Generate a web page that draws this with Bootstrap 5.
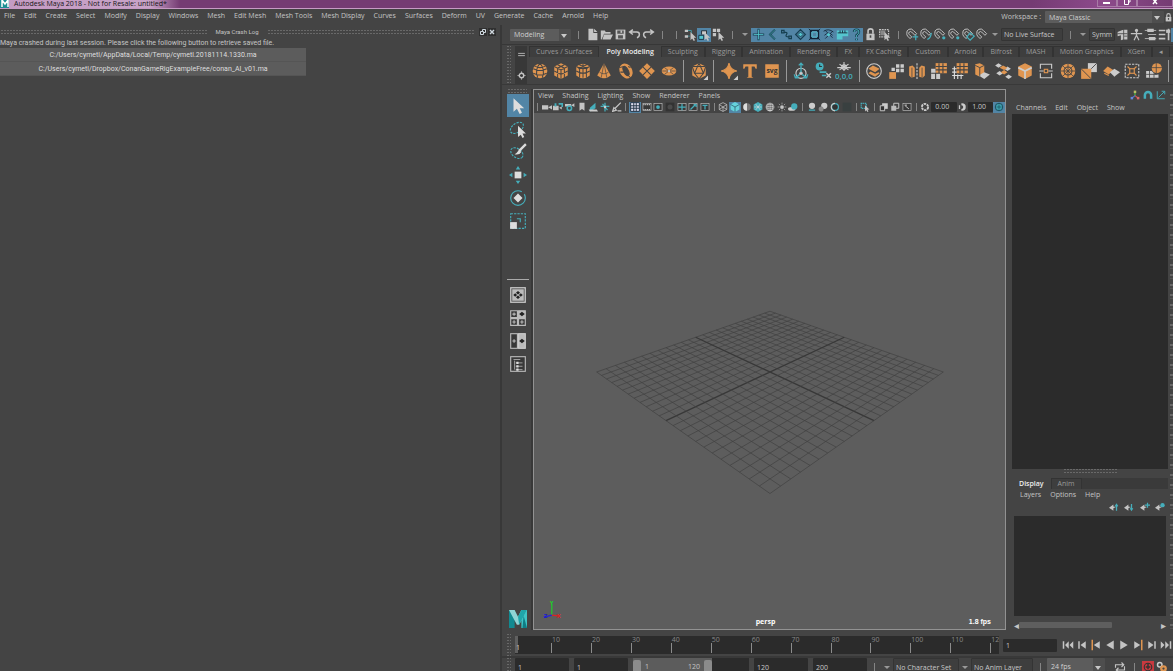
<!DOCTYPE html>
<html lang="en">
<head>
<meta charset="utf-8">
<meta name="viewport" content="width=device-width, initial-scale=1">
<title>Autodesk Maya 2018</title>
<link href="https://cdn.jsdelivr.net/npm/bootstrap@5.3.0/dist/css/bootstrap.min.css" rel="stylesheet">
<style>
:root{--face:#444;--dark:#2b2b2b;--line:#373737;--txt:#c4c4c4;--blue:#5285a6}
body{font:7px/10px "Open Sans","Noto Sans",sans-serif;background:var(--face);color:var(--txt);height:100vh;overflow:hidden}
button{background:none;border:0;padding:0;color:inherit;font:inherit;line-height:inherit}
.titlebar{height:9px;background:linear-gradient(90deg,#c49bc3 0,#c9a3c8 150px,#753b73 180px,#753b73 88%,#8d4a8b 94%,#753b73);border-bottom:1px solid #c79ac5;color:#151515;line-height:7px}
.winbtn{width:20px;height:7px;border:1px solid #a87ba6;border-top:0;color:#fff;display:flex;justify-content:center}
.winbtn.wide{width:36px}
.menubar{height:16px}
.menus{gap:9px;line-height:13px;white-space:nowrap;align-items:flex-start}
.menus.tight{line-height:11px}
.pick{appearance:none;font-size:7px;line-height:11px;height:12px;padding:0 4px;border:0;border-radius:1px;color:#d0d0d0;background:linear-gradient(#4e4e4e,#4e4e4e) right/12px 100% no-repeat #5c5c5c}
.pickbox{position:relative}
.pickbox:after{content:"";position:absolute;right:4px;top:5px;border:3px solid transparent;border-top:4px solid #c8c8c8;border-bottom:0;pointer-events:none}
.range .pickbox:after{top:8px}
.box{font-size:7px;line-height:10px;background:var(--dark);border:0;border-radius:1px;color:#c8c8c8;padding:0 3px;min-width:0}
.hollow{background:#3e3e3e;border:1px solid #343434;height:13px;padding:0 2px}
.leftdock{flex:0 0 42.8%;border-right:2px solid #383838;font-family:Roboto,"Open Sans",sans-serif}
.dockhead{padding-top:2px;padding-bottom:1px;font-size:6px}
.dots,.dotsv{background:conic-gradient(from 90deg at 1px 1px,transparent 270deg,#696969 0) 0 0/3px 3px}
.dots{height:5px}
.dotsv{width:5px;margin-right:4px}
.dockbtn{width:8px;height:8px;background:#303030;color:#cfd8df;margin-left:1px}
.dockbtn svg{display:block;width:100%;height:100%}
.crash{width:61.2%}
.crash button{height:14px;background:#5c5c5c;border-bottom:1px solid #555;color:#dedede}
.status{height:20px;border-bottom:1px solid var(--line)}
.cell{display:flex;align-items:center;justify-content:center;min-width:0}
.cell svg{display:block;flex-shrink:0}
.status .cell{flex:0 0 14px;height:14px}
.status .cell svg{width:13px;height:13px}
.on{background:var(--blue)}
.status .sep,.range .sep{flex:0 0 14px}
.sep:before{content:"";width:1px;height:8px;background:#858585;display:block;margin:auto}
.arr{flex:0 0 12px}
.arr:before{content:"";display:block;border:3px solid transparent;border-top:3px solid #999;border-bottom:0;width:0;margin:auto}
.shelf{height:40px;border-bottom:1px solid #393939;padding-top:1px}
.shelfside{width:12px;background:#383838;margin-right:2px}
.tabs{height:11px;background:#3a3a3a;overflow:hidden}
.tabs button{padding:0 6px;border:1px solid #333;border-bottom:0;line-height:10px;color:#9a9a9a;white-space:nowrap;background:#3e3e3e}
.tabs button.cur{background:var(--face);color:#eee;font-weight:600;border-color:var(--face)}
.shelfrow{height:27px}
.shelfrow .cell{flex:18 1 0}
.shelfrow .sep{flex:7 1 0}
.shelfrow .sep:before{height:22px;background:#999}
.shelfrow .cell svg{width:18px;height:18px}
.tools{width:31px;padding-left:5px;border-right:2px solid #383838}
.tools .cell{width:22px;height:23px}
.tools .cell svg{width:18px;height:18px}
.rule{width:22px;height:1px;background:#aaa;margin-top:47px;margin-bottom:3px}
.view{border:1px solid #929292;background:#5d5d5d;min-width:0}
.viewhead{background:var(--face);height:23px}
.vrow{height:12px}
.vrow .cell{flex:12 1 0;height:11px}
.vrow .cell svg{width:10px;height:10px}
.vrow .sep{flex:7 1 0}
.vrow .box{flex:26 1 0;width:0;height:10px;padding:0;text-indent:4px}
.scene{position:relative}
.scene svg{position:absolute;inset:0;width:100%;height:100%}
.tag{position:absolute;bottom:2px;color:#fff;font-weight:700}
.persp{padding-right:8px}
.fps{right:14px;font-family:"Liberation Sans",sans-serif}
.side{flex:0 0 156px;margin-left:6px}
.sideicons{height:12px}
.well{background:var(--dark)}
.lowerwell{height:114px;margin:0 2px}
.scroll{height:10px}
.scroll span{font-size:10px}
.thumb{width:61%;height:6px;background:#5e5e5e;border-radius:1px}
.time{height:24px;border-bottom:2px solid #393939}
.ruler{background:var(--dark);height:18px;min-width:0}
.tick{position:relative;min-width:0;color:#888;line-height:8px;overflow:hidden;padding-left:1px}
.tick:after{content:"";position:absolute;left:0;bottom:1px;width:1px;height:10px;background:#8c8c8c}
.now{color:#ddd;padding-top:8px}
.now:after{height:17px;width:3px;background:rgba(150,150,150,.5)}
.play .cell{width:14px;height:14px}
.play .cell svg{width:12px;height:12px}
.range{height:13px;overflow:hidden}
.range .box,.range .pick{height:18px;line-height:16px}
.field{width:54px}
.fields{gap:5px;min-width:0}
.thumb2{width:79px;height:18px;background:#5c5c5c}
.grip{width:8px;height:14px;background:#8b8b8b;border-radius:2px}
.edge{width:5px;border-left:2px solid var(--face);background:repeating-linear-gradient(#444 0 5px,#686868 5px 7px,#444 7px 9px,#555 9px 10px)}
</style>
</head>
<body class="d-flex flex-column">
<header class="titlebar d-flex flex-shrink-0">
  <svg width="10" height="8" viewBox="0 0 10 8" class="flex-shrink-0"><rect width="9" height="8" fill="#1d8f95"/><path d="M2 7V0l3 4 3-4v7" fill="none" stroke="#fff" stroke-width="1.5"/></svg>
  <span class="ps-1 flex-grow-1 text-nowrap">Autodesk Maya 2018 - Not for Resale: untitled*</span>
  <button class="winbtn" aria-label="Minimize"><svg width="8" height="6"><path d="M0 3h7" stroke="#fff" stroke-width="2"/></svg></button>
  <button class="winbtn" aria-label="Restore"><svg width="8" height="6" fill="none" stroke="#fff"><path d="M1.500 0v4.500h4V0M5 2h2V0"/></svg></button>
  <button class="winbtn wide" aria-label="Close"><svg width="8" height="6"><path d="M2 4l4-5M6 4L2-1" stroke="#fff" stroke-width="1.500"/></svg></button>
</header>
<nav class="menubar d-flex flex-shrink-0 justify-content-between">
  <div class="menus d-flex ps-1" data-menu="File|Edit|Create|Select|Modify|Display|Windows|Mesh|Edit Mesh|Mesh Tools|Mesh Display|Curves|Surfaces|Deform|UV|Generate|Cache|Arnold|Help"></div>
  <div class="d-flex align-items-center">
    <label for="ws" class="pe-1">Workspace :</label>
    <div class="pickbox"><select id="ws" class="pick" style="width:119px"><option>Maya Classic</option></select></div>
    <div class="d-flex" data-icons="lock"></div>
  </div>
</nav>
<main class="d-flex flex-grow-1" style="min-height:0">
  <section class="leftdock">
    <div class="dockhead d-flex align-items-center pe-1">
      <div class="dots flex-grow-1"></div><span class="px-2">Maya Crash Log</span><div class="dots flex-grow-1 me-1"></div>
      <button class="dockbtn" aria-label="Float"><svg viewBox="0 0 8 8" fill="none" stroke="currentColor"><path d="M3.500 3V1.500h3v3H5M1.500 3.500h3v3h-3z"/></svg></button>
      <button class="dockbtn" aria-label="Close panel"><svg viewBox="0 0 8 8" stroke="currentColor" stroke-width="1.400"><path d="M2 2l4 4M6 2L2 6"/></svg></button>
    </div>
    <div class="text-nowrap">Maya crashed during last session. Please click the following button to retrieve saved file.</div>
    <div class="crash d-flex flex-column">
      <button>C:/Users/cymetl/AppData/Local/Temp/cymetl.20181114.1330.ma</button>
      <button>C:/Users/cymetl/Dropbox/ConanGameRigExampleFree/conan_AI_v01.ma</button>
    </div>
  </section>
  <section class="d-flex flex-column flex-grow-1" style="min-width:0">
    <div class="status d-flex align-items-center ps-1 flex-shrink-0 overflow-hidden">
      <div class="dotsv align-self-stretch my-1"></div>
      <div class="pickbox"><select class="pick" aria-label="Menu set" style="width:61px"><option>Modeling</option></select></div>
      <div class="d-flex align-items-center flex-grow-1" data-icons="| file open save undo redo | | selA selB* selC | v snap1* snap2* snap3* snap4* snap5* snap6* snap7* help* lock selD | mag1 mag3 mag2 mag2 mag4 mag0 v =No_Live_Surface=62 | v =Symm=26 hand person sliders sliders2 ball*"></div>
    </div>
    <div class="shelf d-flex ps-1 flex-shrink-0">
      <div class="dotsv"></div>
      <div class="shelfside d-flex flex-column justify-content-between align-items-center pt-1 pb-1" data-icons="bars gear"></div>
      <div class="flex-grow-1" style="min-width:0">
        <div class="tabs d-flex" data-menu="Curves / Surfaces|*Poly Modeling|Sculpting|Rigging|Animation|Rendering|FX|FX Caching|Custom|Arnold|Bifrost|MASH|Motion Graphics|XGen|◂"></div>
        <div class="shelfrow d-flex align-items-center" data-icons="sphere cube cyl cone torus plane disc | poly | star type svg | axis hist freeze | comb sep mirror fillh grid2 extr bridge bevel wedge wheel dup boolean lattice smooth |"></div>
      </div>
    </div>
    <div class="d-flex flex-grow-1 pt-1" style="min-height:0">
      <aside class="tools d-flex flex-column">
        <div class="dots me-1"></div>
        <div data-icons="arrow* lasso brush move rotate scale"></div>
        <div class="rule"></div>
        <div data-icons="single four two outline"></div>
        <div class="mt-auto" data-icons="maya"></div>
      </aside>
      <section class="view flex-grow-1 d-flex flex-column">
        <div class="viewhead">
          <div class="menus tight d-flex ps-1" data-menu="View|Shading|Lighting|Show|Renderer|Panels"></div>
          <div class="vrow d-flex align-items-center" data-icons="| cam camT camL book plT pivot pen | gridI* film res mask field safe titleI | wire shade* half tex check light shadow | ao motion aa dim | isoSel | xray xrayj expo | gam =0.00=0 gam2 =1.00=0 srgb*"></div>
        </div>
        <div class="scene flex-grow-1">
          <svg viewBox="-1 -2 471 518" aria-label="Perspective grid">
            <g id="grid" stroke="#414141" stroke-width=".7"></g>
            <g stroke-width="1.200"><path d="M16 502v-11" stroke="#1fce2b"/><path d="M16 502l8 1" stroke="#d22"/><path d="M16 502l-8 2" stroke="#22d"/></g>
            <g font-size="6" font-weight="700"><text x="14" y="492" fill="#1fce2b">Y</text><text x="21" y="505" fill="#d22">X</text><text x="8" y="505" fill="#1c1cc8">Z</text></g>
          </svg>
          <div class="tag persp start-0 end-0 text-center">persp</div>
          <div class="tag fps">1.8 fps</div>
        </div>
      </section>
      <aside class="side d-flex flex-column">
        <div class="sideicons vrow d-flex justify-content-end"><div class="d-flex" style="width:40px" data-icons="axisC magC graph"></div></div>
        <div class="menus d-flex ps-1" data-menu="Channels|Edit|Object|Show"></div>
        <div class="well flex-grow-1"></div>
        <div class="dots align-self-center" style="width:54px"></div>
        <div class="tabs d-flex mt-1" data-menu="*Display|Anim"></div>
        <div class="menus tight d-flex ps-2" data-menu="Layers|Options|Help"></div>
        <div class="vrow d-flex justify-content-end align-items-end"><div class="d-flex" style="width:62px" data-icons="lay1 lay2 lay3 lay4"></div></div>
        <div class="lowerwell d-flex flex-column mt-1">
          <div class="well flex-grow-1"></div>
          <div class="scroll d-flex align-items-center mt-1"><span>◂</span><div class="thumb"></div><span class="ms-auto">▸</span></div>
        </div>
      </aside>
      <div class="edge ms-auto"></div>
    </div>
    <div class="time d-flex align-items-center ps-1 flex-shrink-0 mt-1">
      <div class="dotsv align-self-stretch"></div>
      <div class="ruler d-flex flex-grow-1" id="ruler"></div>
      <input class="box field ms-1" aria-label="Current frame" value="1" style="height:13px">
      <div class="play d-flex ps-1" data-icons="pStart pPrev pKeyL pBack pFwd pKeyR pNext pEnd"></div>
    </div>
    <div class="range d-flex ps-1 flex-shrink-0">
      <div class="dotsv"></div>
      <div class="fields d-flex flex-grow-1 align-items-start">
        <input class="box field" aria-label="Animation start" value="1">
        <input class="box field" aria-label="Playback start" value="1">
        <div class="flex-grow-1 well">
          <div class="thumb2 d-flex align-items-center justify-content-between"><span class="grip"></span><span class="me-auto ps-1">1</span><span class="pe-1">120</span><span class="grip"></span></div>
        </div>
        <input class="box field" aria-label="Playback end" value="120">
        <input class="box field" aria-label="Animation end" value="200">
      </div>
      <div class="d-flex align-items-center" style="height:18px" data-icons="| v =No_Character_Set=66 v =No_Anim_Layer=62 |"></div>
      <div class="pickbox"><select class="pick" aria-label="Frame rate" style="width:58px"><option>24 fps</option></select></div>
      <div class="play d-flex align-items-center ps-2 pe-1" style="height:18px" data-icons="loop | autokey gear2"></div>
    </div>
  </section>
</main>
<script>
const T='#45aebb',O='#df9550',K='#444';
const magnet='<path d="M1 6.500A4.500 4.500 0 0 1 9 3l4 4-2 2-4-4a2 2 0 0 0-3 3l3 3-2 2-3-3a4.500 4.500 0 0 1-1-3.500" fill="none" stroke="currentColor" stroke-width="1.200"/>';
const poly=(f,l)=>`<g fill="${O}">${f}</g><g fill="none" stroke="${K}" stroke-width=".9">${l}</g>`;
const frame=s=>`<rect x="1.500" y="2.500" width="13" height="11" fill="#383838" stroke="currentColor"/>${s}`;
const lay='<path d="M0 9l7-5v3l4 1-4 2v4z" fill="currentColor"/>';
const ptr='<path d="M8 5v10l2-2 2 3 1.500-1-1.500-3h3z" fill="currentColor"/>';
const I={
file:'<path d="M3 1h6v5h5v9H3zM10 1l4 4h-4z" fill="currentColor"/>',
open:'<path d="M1 3h5l1 2h6v2H5l-3 7H1zM5 8h11l-3 6H3z" fill="currentColor"/>',
save:'<path d="M2 2h12v12H2z" fill="currentColor"/><path d="M4 3h8v4H4zM5 9h6v4H5z" fill="#555"/><path d="M8 3h2v3H8z" fill="currentColor"/>',
undo:'<path d="M6 2L2 5l4 3M2 5h9q3 0 3 3t-3 4" fill="none" stroke="currentColor" stroke-width="1.800"/>',
redo:'<path d="M10 2l4 3-4 3M14 5H5q-3 0-3 3t3 4" fill="none" stroke="currentColor" stroke-width="1.800"/>',
selA:`<path d="M1 2h4v3H1zM1 9h4v3H1z" fill="currentColor"/><path d="M5 3h4v3M5 10h2" stroke="${T}" fill="none"/>`+ptr,
selB:`<path d="M4 3h7v5H4z" fill="#222"/><path d="M5 4h5v4H5z" fill="#ccc"/><path d="M1 9h6v5H1z" fill="#55c6cf" stroke="#123"/>`+ptr,
selC:'<path d="M1 1h4v4H1zM6 1h4v4H6zM1 6h4v4H1z" fill="currentColor"/>'+ptr,
selD:'<path d="M2 2h11v9H2z" fill="none" stroke="currentColor" stroke-width="1.500" stroke-dasharray="2 1"/><path d="M3 3h6v6H3z" fill="#888"/>'+ptr,
snap1:'<path d="M8 1v14M1 8h14" stroke="#163f50" stroke-width="2.500"/><path d="M8 2v12M2 8h12" stroke="#55c6cf"/>',
snap2:'<path d="M11 2L5 8l6 6" stroke="#163f50" stroke-width="2.500" fill="none"/><path d="M11 2L5 8l6 6" stroke="#55c6cf" stroke-width=".8" fill="none"/>',
snap3:'<path d="M2 3h3v3H2zM11 10h3v3h-3zM5 5q5 0 3 3t3 3" stroke="#163f50" stroke-width="1.500" fill="none"/>',
snap4:'<path d="M8 2l6 6-6 6-6-6z" fill="none" stroke="#163f50" stroke-width="1.500"/><path d="M8 5l3 3-3 3-3-3z" fill="#55c6cf" stroke="#163f50"/>',
snap5:'<path d="M3 3h10v10H3z" fill="none" stroke="#123" stroke-width="1.500"/><path d="M5 5h6v6H5z" fill="none" stroke="#55c6cf"/><path d="M1 1l4 4M15 15l-4-4M15 1l-4 4M1 15l4-4" stroke="#123"/>',
snap6:'<path d="M2 4q6-4 12 1M3 9q5-5 10 0M4 13l9-9M4 3l9 9" stroke="#123" fill="none"/><circle cx="8" cy="8" r="2" fill="#55c6cf"/>',
snap7:'<path d="M1 3h14v7H8v4H1z" fill="#55c6cf"/><path d="M2 6h12M5 3v3M8 3v3M11 3v3" stroke="#123"/>',
help:'<path d="M5 5q0-3 3-3t3 3q0 2-3 4v2M8 13v2" stroke="#163f50" stroke-width="3" fill="none"/><path d="M5 5q0-3 3-3t3 3q0 2-3 4v2M8 13v2" stroke="#55c6cf" fill="none"/>',
lock:'<path d="M3 7h10v8H3z" fill="currentColor"/><path d="M5 7V4q0-3 3-3t3 3v3" fill="none" stroke="currentColor" stroke-width="2"/><path d="M8 9v3" stroke="#444" stroke-width="2"/>',
mag0:magnet,
mag1:magnet+`<path d="M12 8v7M8 11h7" stroke="${T}" stroke-width="1.500"/>`,
mag2:magnet+`<circle cx="12" cy="12" r="2" fill="${T}"/>`,
mag3:magnet+`<path d="M9 14q4-1 5-8" stroke="${T}" fill="none" stroke-width="1.500"/>`,
mag4:magnet+`<path d="M10 6l5 4-5 5-4-4z" fill="none" stroke="${T}" stroke-width="1.500"/>`,
hand:'<path d="M2 5l7-3v12l-3 1V9L2 10zM10 2h4v12h-4z" fill="currentColor"/><path d="M2 7h12M10 10h4" stroke="#444"/>',
person:'<circle cx="8" cy="3" r="2" fill="currentColor"/><path d="M1 7h14M8 4v6M8 9l-3 6M8 9l3 6" stroke="currentColor" stroke-width="1.500"/>',
sliders:'<path d="M1 3h14M5 8h10M1 13h14" stroke="currentColor"/><path d="M4 1h8v4H4zM6 11h8v4H6z" fill="currentColor"/>',
sliders2:'<path d="M1 3h8M1 8h8M1 13h8M13 1v14" stroke="currentColor" stroke-width="2"/><path d="M10 2h5v4h-5z" fill="currentColor"/>',
ball:'<circle cx="8" cy="8" r="6" fill="#cde"/><path d="M2 7q6 3 12 0M3 11q5 3 10 0" stroke="#246" fill="none"/>',
bars:'<path d="M2 6h12M2 10h12" stroke="currentColor" stroke-width="1.500"/>',
gear:'<circle cx="8" cy="8" r="4" fill="none" stroke="currentColor" stroke-width="2.500"/><path d="M8 1v2M8 13v2M1 8h2M13 8h2" stroke="currentColor" stroke-width="2"/>',
sphere:poly('<circle cx="8" cy="8" r="6.500"/>','<path d="M2 6q6 3 12 0M2 10q6 3 12 0M3 3.500q5 3 10 0M8 1Q3 7 6 14M8 1q5 6 2 13"/>'),
cube:poly('<path d="M8 1l6 3v8l-6 3-6-3V4z"/>','<path d="M2 4l6 3 6-3M8 7v8M5 2.500l6 3V14M11 2.500l-6 3V14M2 8l6 3 6-3"/>'),
cyl:poly('<path d="M2 4q6-5 12 0v8q-6 5-12 0z"/>','<path d="M2 4q6 4 12 0M2 8q6 4 12 0M8 1v13M5 6v8M11 6v8M4 2l8 4M12 2L4 6"/>'),
cone:poly('<path d="M8 1l6 11q-6 5-12 0z"/>','<path d="M8 1L5.500 14M8 1l2.500 13M4 9q4 3 8 0" stroke-width=".6"/>'),
torus:poly('<ellipse cx="8" cy="8" rx="5.500" ry="7" transform="rotate(-30 8 8)"/>','<ellipse cx="8" cy="8" rx="2" ry="4.500" fill="#444" transform="rotate(-30 8 8)"/><path d="M2 5l4-1M3 9l3 0M10 12l2 2M10 4l2 1"/>'),
plane:poly('<path d="M8 1l7 7-7 7-7-7z"/>','<path d="M4.500 4.500l7 7M11.500 4.500l-7 7"/>'),
disc:poly('<ellipse cx="8" cy="8" rx="6.500" ry="4"/>','<path d="M2 8h12M4 5l8 6M12 5l-8 6" stroke-width=".6"/><circle cx="8" cy="8" r="1" fill="#ccc" stroke="none"/>'),
poly:poly('<path d="M8 1l6 3v8l-6 3-6-3V4z"/>','<path d="M8 1L4 10h8zM2 4l12 0M4 10l4 5 4-5M2 4l2 6M14 4l-2 6"/>')+'<path d="M16 12v4h-4z" fill="#ccc"/>',
star:`<path d="M8 1q1 6 7 7-6 1-7 7-1-6-7-7 6-1 7-7" fill="${O}" stroke="${O}"/><path d="M16 12v4h-4z" fill="#ccc"/>`,
type:`<path d="M2 2h12v4h-1l-1-2H9.500v9l1.500 1H5l1.500-1V4H4L3 6H2z" fill="${O}"/>`,
svg:`<rect x="2" y="2" width="12" height="12" fill="${O}"/><text x="8" y="9.500" text-anchor="middle" font-size="6" font-weight="700" fill="#333">svg</text>`,
axis:`<circle cx="8" cy="10" r="4.500" fill="none" stroke="#ccc"/><circle cx="8" cy="10" r="1.500" fill="#ccc"/><path d="M8 1v8M3 14l4-3M13 14l-4-3M6 3l2-2 2 2M2 11l1 3h3M14 11l-1 3h-3" stroke="${T}" stroke-width="1.200" fill="none"/>`,
hist:`<circle cx="5" cy="4" r="3.500" fill="${T}"/><path d="M5 2v2h2" stroke="#333" fill="none"/><path d="M5 9h6M7 12h4" stroke="${T}" stroke-width="1.500"/><path d="M11 10l4 4M15 10l-4 4" stroke="#ccc" stroke-width="1.300"/>`,
freeze:`<path d="M8 0v8M4 2l8 5M12 2L4 7M2 5h12" stroke="#ccc"/><circle cx="8" cy="4.500" r="2" fill="none" stroke="#ccc"/><text x="8" y="15" text-anchor="middle" font-size="7" font-weight="600" fill="${T}">0,0,0</text>`,
comb:`<circle cx="8" cy="8" r="6.500" fill="none" stroke="#ccc"/><path d="M3 6l4-3 6 3-4 3zM3 10l2-1.500 4 2 3-1.500 1 1-4 3z" fill="${O}"/>`,
sep:`<path d="M8 2h3v3H8zM12 2h3v3h-3zM8 6h3v3H8zM12 6h3v3h-3zM4 5h3v3H4z" fill="#ccc"/><path d="M2 9h6v6H2z" fill="${O}"/>`,
mirror:`<path d="M1 4l3-1 2 2v8l-3 1-2-2zM15 4l-3-1-2 2v8l3 1 2-2z" fill="${O}"/><path d="M8 1v14" stroke="#ccc" stroke-dasharray="2 1"/><path d="M3.500 5v9M12.500 5v9" stroke="${K}" stroke-width=".7"/>`,
fillh:`<path d="M5 1h10v9H5z" fill="${O}"/><path d="M1 6h4v4h4v5H1z" fill="#ccc"/><path d="M8 1v9M11.500 1v9M5 4h10M5 7h10M1 10h8M5 10v5" stroke="${K}"/>`,
grid2:`<path d="M5 1h10v9H5z" fill="${O}"/><path d="M1 6h4M1 9h4M1 12h10M3 4v11M6 11v4M9 11v4" stroke="#ddd"/><path d="M8 1v9M11.500 1v9M5 4h10M5 7h10" stroke="${K}"/>`,
extr:`<path d="M2 2l4-1 4 2v7l-4 3-4-2z" fill="${O}"/><path d="M10 9l5 2-5 4-5-3z" fill="#ccc"/><path d="M2 3l4 2 4-2M6 5v8" stroke="${K}" stroke-width=".8" fill="none"/>`,
bridge:`<path d="M1 3l3-2 3 2-3 2zM9 6l3-2 3 2-3 2zM2 10l3-2 3 2-3 2zM10 13l3-2 3 2-3 2z" fill="#ccc"/><path d="M5 5l3-2 4 2-3 2zM6 9l3-2 3 2-3 2z" fill="${O}"/>`,
bevel:poly('<path d="M8 1l6 3v8l-6 3-6-3V4z"/>','<path d="M2 5l6 3 6-3M8 8v7" stroke="#ccc" stroke-width="1.500"/>'),
wedge:`<path d="M3 6V2h10v4M3 10v4h10v-4M2 8h4M10 8h4" stroke="#ccc" fill="none"/><rect x="6.500" y="6.500" width="3" height="3" fill="#444" stroke="${O}"/>`,
wheel:poly('<circle cx="8" cy="8" r="6.500"/>','<circle cx="8" cy="8" r="3.500"/><path d="M8 1v14M1 8h14M3 3l10 10M13 3L3 13" stroke-width=".7"/>'),
dup:`<path d="M7 1h8v8H7z" fill="#ccc"/><path d="M1 6h9v9H1z" fill="${O}"/><path d="M1 6l9 9M10 6l5-5" stroke="${K}" stroke-width=".8"/>`,
boolean:`<path d="M1 8l4-4 5 3-4 4z" fill="${O}"/><path d="M7 9l4-3 5 3-5 4z" fill="#ccc"/><path d="M2 10l4 2" stroke="${O}"/>`,
lattice:`<rect x="2" y="2" width="12" height="12" stroke="#ccc" fill="none" stroke-dasharray="2 1"/><path d="M4 4l8 8M12 4l-8 8" stroke="${O}"/><rect x="6" y="6" width="4" height="4" fill="${K}" stroke="${O}"/>`,
smooth:`<circle cx="10.500" cy="5.500" r="4.500" fill="${O}"/><path d="M1 8h5l3 3h3v3H1z" fill="#ccc"/><path d="M1 11h10M4 8v6M8 10v4M6 5h9M10 1v9" stroke="${K}" stroke-width=".7"/>`,
arrow:'<path d="M4 1v12l3-2.500L9.500 15l2-1-2-4h4z" fill="#ddd"/>',
lasso:`<ellipse cx="7" cy="7" rx="6.500" ry="4" transform="rotate(-35 7 7)" fill="none" stroke="${T}" stroke-dasharray="2 1"/><path d="M8 5v10l2.500-2 1.500 3 1.500-1-1.500-3h3z" fill="#ddd"/>`,
brush:`<ellipse cx="7" cy="9" rx="6" ry="4" transform="rotate(35 7 9)" fill="none" stroke="${T}" stroke-dasharray="2 1"/><path d="M15 1L9 7" stroke="#ddd" stroke-width="2"/><path d="M9 6l2 2q-2 3-6 2 2-1 4-4" fill="#ddd"/>`,
move:`<path d="M5 5h6v6H5z" fill="#ddd"/><path d="M8 0l2 3H6zM8 16l2-3H6zM0 8l3-2v4zM16 8l-3-2v4z" fill="${T}"/>`,
rotate:`<circle cx="8" cy="8" r="6.500" fill="none" stroke="${T}" stroke-dasharray="34 3"/><path d="M8 4l4 4-4 4-4-4z" fill="#ddd"/>`,
scale:`<rect x="1.500" y="1.500" width="13" height="13" fill="none" stroke="${T}" stroke-dasharray="2 1"/><path d="M1 9h6v6H1z" fill="#ddd"/><path d="M7 6h3v3" stroke="${T}" fill="none"/>`,
single:'<rect x="1" y="1" width="14" height="14" fill="#ccc"/><rect x="2.500" y="2.500" width="11" height="11" fill="#bbb" stroke="#555" stroke-width=".8"/><path d="M8 4.500l1.800 1.500L8 7.500 6.200 6zM8 8.500l1.800 1.500L8 11.500 6.200 10zM5.500 6.500L7.200 8 5.500 9.500 3.800 8zM10.500 6.500L12.200 8l-1.700 1.500L8.800 8z" fill="#222"/>',
four:'<g fill="#383838" stroke="#bbb"><path d="M1.500 1.500h6v6h-6zM1.500 8.500h6v6h-6zM8.500 8.500h6v6h-6z"/><path d="M8.500 1.500h6v6h-6z" fill="#bbb"/><path d="M3 4.500h3M4.500 3v3M3 11.500h3M4.500 10v3M10 11.500h3M11.500 10v3"/></g><path d="M9 4.500l2.500-2 2.500 2-2.500 2z" fill="#222"/>',
two:'<rect x="1.500" y="1.500" width="6" height="13" fill="#383838" stroke="#bbb"/><rect x="8.500" y="1.500" width="6" height="13" fill="#bbb" stroke="#ccc"/><path d="M3 8h3M4.500 6.500v3" stroke="#bbb"/><path d="M9 8l2.500-2L14 8l-2.500 2z" fill="#222"/>',
outline:'<rect x="1.500" y="1.500" width="13" height="13" fill="#383838" stroke="#bbb"/><path d="M4 4h6M5 5v8M6 7h6M6 10h6M6 13h6" stroke="#aaa" stroke-width=".8"/><path d="M6.500 6h2v2h-2zM6.500 9h2v2h-2zM6.500 12h2v2h-2z" fill="#ddd"/>',
maya:'<path d="M0 0h5v16H0z" fill="#128a91"/><path d="M11 0h5v16h-5z" fill="#3fc4c6"/><path d="M0 0h5l3 6 3-6h5L9 13H7z" fill="#8ed4d5"/><path d="M8 6l3-6h5L9 13z" fill="#1fa5aa"/><path d="M13 5l3 11h-4z" fill="#0f7d85"/>',
cam:'<path d="M0 5h10v7H0zM10 8.500l6-3.500v7z" fill="currentColor"/>',
camT:`<path d="M0 6h9v7H0zM10 9l4-2v5z" fill="currentColor"/><path d="M9 3h6v5M4 2v5" stroke="${T}" fill="none" stroke-width="3"/>`,
camL:`<path d="M0 3h10v4H0zM10 5l5-3v6z" fill="currentColor"/><circle cx="7" cy="10" r="3.500" fill="none" stroke="${T}" stroke-width="2.500"/>`,
book:'<path d="M4 1h8v13l-4-3-4 3z" fill="currentColor"/>',
plT:`<path d="M3 9l9-8v9l-9 5z" fill="${T}"/><path d="M1 12h13l2 3H3z" fill="#ccc"/>`,
pivot:`<path d="M8 1v14M1 7h14M4 3l8 10" stroke="${T}" stroke-width="2"/><circle cx="8" cy="8" r="2" fill="#ccc"/>`,
pen:'<path d="M14 1L5 10M3 9l4 4-6 2zM9 14h6" stroke="currentColor" stroke-width="2" fill="none"/>',
gridI:'<path d="M1 1h14v14H1z" fill="#dde"/><path d="M1 1h14v14H1zM6 1v14M10 1v14M1 6h14M1 10h14" stroke="#234" stroke-width="1.500" fill="none"/>',
film:frame('<path d="M2 4h12M2 12h12" stroke="#bbb" stroke-dasharray="2 1" stroke-width="2"/>'),
res:frame(`<circle cx="8" cy="8" r="3" fill="${T}"/>`),
mask:'<rect x="1" y="1" width="14" height="14" fill="#333"/><circle cx="8" cy="8" r="4" fill="#4c4c4c"/>',
field:frame(`<path d="M8 3v10M2 8h12" stroke="${T}" stroke-width="2"/>`),
safe:frame(`<path d="M4 12l8-8M9 4h4v4" stroke="${T}" fill="none" stroke-width="2"/>`),
titleI:frame(`<path d="M4 5.500h8M8 5v7" stroke="${T}" stroke-width="2"/>`),
wire:'<path d="M8 1l6 3v8l-6 3-6-3V4zM2 4l6 4 6-4M8 8v7M2 12l6-4 6 4" stroke="currentColor" fill="none" stroke-width="1.200"/>',
shade:'<path d="M8 0l7 4v8l-7 4-7-4V4z" fill="#66d3dc"/><path d="M1 4l7 4 7-4M8 8v8" stroke="#245" fill="none"/>',
half:'<circle cx="8" cy="8" r="6" fill="#777"/><path d="M8 2a6 6 0 0 0 0 12z" fill="#ddd"/>',
tex:`<path d="M8 0l7 4v8l-7 4-7-4V4z" fill="${T}"/><path d="M4 3l8 10M12 3L4 13M2 8h12" stroke="#ddd"/>`,
check:'<circle cx="8" cy="8" r="7" fill="#ccc"/><path d="M1 5h14M1 8h14M1 11h14M5 2v12M8 2v12M11 2v12" stroke="#444" stroke-dasharray="1.500 1.500" stroke-width="1.300"/>',
light:'<circle cx="8" cy="8" r="3" fill="currentColor"/><path d="M8 1v3M8 12v3M1 8h3M12 8h3M3 3l2 2M11 11l2 2M13 3l-2 2M5 11l-2 2" stroke="currentColor"/>',
shadow:`<ellipse cx="6" cy="11" rx="6" ry="3" fill="#ccc"/><circle cx="10" cy="7" r="5" fill="${T}"/>`,
ao:`<circle cx="8" cy="6" r="5" fill="#ccc"/><path d="M3 13h10" stroke="${T}" stroke-width="2"/>`,
motion:'<circle cx="10" cy="6" r="5" fill="#ccc"/><circle cx="5" cy="11" r="4" fill="#888"/>',
aa:`<circle cx="8" cy="8" r="5.500" fill="#333" stroke="${T}" stroke-width="2"/><path d="M8 2a6 6 0 0 0 0 12" stroke="#ccc" fill="none" stroke-width="2"/>`,
dim:'<rect x="1" y="1" width="14" height="14" fill="#394040"/>',
isoSel:`<path d="M2 2h8v8H2z" fill="none" stroke="${T}" stroke-width="2" stroke-dasharray="2 1"/>`+ptr,
xray:'<path d="M5 2h9v9H5z" fill="#ccc"/><path d="M2 6h7v8H2z" fill="#333" stroke="#ccc" stroke-width="1.500"/>',
xrayj:'<path d="M6 2h8v8H6z" fill="none" stroke="#ccc" stroke-width="1.500"/><path d="M2 6h8v8H2z" fill="#bbb"/>',
expo:frame('<path d="M5 6l6 5M4 5h4" stroke="#ccc" stroke-width="1.500"/>'),
gam:'<circle cx="8" cy="8" r="5" fill="none" stroke="#ccc" stroke-width="3" stroke-dasharray="4 1.200"/>',
gam2:'<path d="M7 2h1a6 6 0 0 1 0 12H7v-3a3 3 0 0 0 0-6zM3 5h2v6H3z" fill="#ccc"/>',
srgb:'<circle cx="8" cy="8" r="6" fill="#3e9fae" stroke="#184a58" stroke-width="1.500"/><path d="M4 8h8M8 4v8" stroke="#184a58"/>',
axisC:'<path d="M8 9V3" stroke="#4b4" stroke-width="2"/><path d="M8 9l-5 4" stroke="#57d" stroke-width="2"/><path d="M8 9l5 4" stroke="#d55" stroke-width="2"/><path d="M6 1h4v4H6z" fill="#bb6"/><path d="M1 11h4v4H1z" fill="#68d"/><path d="M11 11h4v4h-4z" fill="#d66"/>',
magC:`<path d="M3 14V8a5 5 0 0 1 10 0v6" fill="none" stroke="${T}" stroke-width="4"/>`,
graph:`<path d="M2 2v12h12M4 12L14 2M9 2h5v5" fill="none" stroke="${T}" stroke-width="1.500"/>`,
lay1:lay+`<path d="M12 14V5M10 7l2-3 2 3" stroke="${T}" stroke-width="2" fill="none"/>`,
lay2:lay+`<path d="M12 3v9M10 10l2 3 2-3" stroke="${T}" stroke-width="2" fill="none"/>`,
lay3:lay+`<path d="M12 1v8M8 5h8" stroke="${T}" stroke-width="2"/>`,
lay4:lay+`<circle cx="12" cy="5" r="3.500" fill="${T}"/>`,
pStart:'<path d="M1 3h2v10H1zM9 3v10L4 8zM15 3v10l-5-5z" fill="currentColor"/>',
pPrev:'<path d="M3 3h2v10H3zM13 3v10L6 8z" fill="currentColor"/>',
pKeyL:`<path d="M2 1h2v14H2z" fill="${O}"/><path d="M13 3v10L5 8z" fill="currentColor"/>`,
pBack:'<path d="M13 2v12L3 8z" fill="currentColor"/>',
pFwd:'<path d="M3 2v12l10-6z" fill="currentColor"/>',
pKeyR:`<path d="M12 1h2v14h-2z" fill="${O}"/><path d="M3 3v10l8-5z" fill="currentColor"/>`,
pNext:'<path d="M11 3h2v10h-2zM3 3v10l7-5z" fill="currentColor"/>',
pEnd:'<path d="M13 3h2v10h-2zM1 3v10l5-5zM7 3v10l5-5z" fill="currentColor"/>',
loop:'<path d="M2 9V5h10M10 2l3 3-3 3M14 7v5H4M6 9l-3 3 3 3" fill="none" stroke="currentColor" stroke-width="1.500"/>',
autokey:'<rect width="16" height="16" fill="#c8393f"/><circle cx="8" cy="8" r="5" fill="none" stroke="#333" stroke-width="1.500"/><path d="M8 3v8M5 8h6" stroke="#333" stroke-width="2"/>',
gear2:`<circle cx="5" cy="5" r="3" fill="none" stroke="#ccc" stroke-width="2"/><circle cx="10" cy="10" r="4.500" fill="${O}"/><circle cx="10" cy="10" r="1.500" fill="#444"/>`
};
document.querySelectorAll('[data-menu]').forEach(el=>{
  el.innerHTML=el.dataset.menu.split('|').map(t=>t[0]=='*'?`<button class="cur">${t.slice(1)}</button>`:`<button>${t}</button>`).join('');
});
document.querySelectorAll('[data-icons]').forEach(el=>{
  el.innerHTML=el.dataset.icons.split(' ').map(n=>{
    if(n=='|')return '<span class="sep d-block"></span>';
    if(n=='v')return '<button class="arr" aria-label="Options"></button>';
    if(n[0]=='='){
      const [,t,w]=n.split('='),v=t.replace(/_/g,' ');
      return w=='0'?`<input class="box" aria-label="Value" value="${v}">`:`<input class="box hollow" aria-label="${v}" value="${v}" style="flex:0 0 ${w}px;width:${w}px">`;
    }
    const on=n.endsWith('*'),k=on?n.slice(0,-1):n;
    return `<button class="cell${on?' on':''}" aria-label="${k}"><svg viewBox="0 0 16 16" width="9" height="9">${I[k]}</svg></button>`;
  }).join('');
});
// Ground plane: project a 24 x 24 grid onto the four visible corners.
const P=[[235,197],[409,258],[235,380],[61,258]];
const [a,b,c,d]=P,dx1=b[0]-c[0],dx2=d[0]-c[0],sx=a[0]-b[0]+c[0]-d[0],dy1=b[1]-c[1],dy2=d[1]-c[1],sy=a[1]-b[1]+c[1]-d[1];
const D=dx1*dy2-dx2*dy1,g=(sx*dy2-dx2*sy)/D,h=(dx1*sy-sx*dy1)/D;
const pt=(u,v)=>{const w=g*u+h*v+1;return [((b[0]-a[0]+g*b[0])*u+(d[0]-a[0]+h*d[0])*v+a[0])/w,((b[1]-a[1]+g*b[1])*u+(d[1]-a[1]+h*d[1])*v+a[1])/w].map(n=>n.toFixed(1)).join(' ')};
let s='';
for(let i=0;i<=24;i++){const t=i/24,k=i==12?' stroke="#383838" stroke-width="1.3"':'';s+=`<path d="M${pt(t,0)}L${pt(t,1)}M${pt(0,t)}L${pt(1,t)}"${k}/>`}
document.getElementById('grid').innerHTML=s;
let r='<div class="tick now" style="flex:9 1 0">1</div>';
for(let f=10;f<=120;f+=10)r+=`<div class="tick" style="flex:${f==120?2:10} 1 0">${f}</div>`;
document.getElementById('ruler').innerHTML=r;
</script>
<script src="https://cdn.jsdelivr.net/npm/bootstrap@5.3.0/dist/js/bootstrap.bundle.min.js"></script>
</body>
</html>
